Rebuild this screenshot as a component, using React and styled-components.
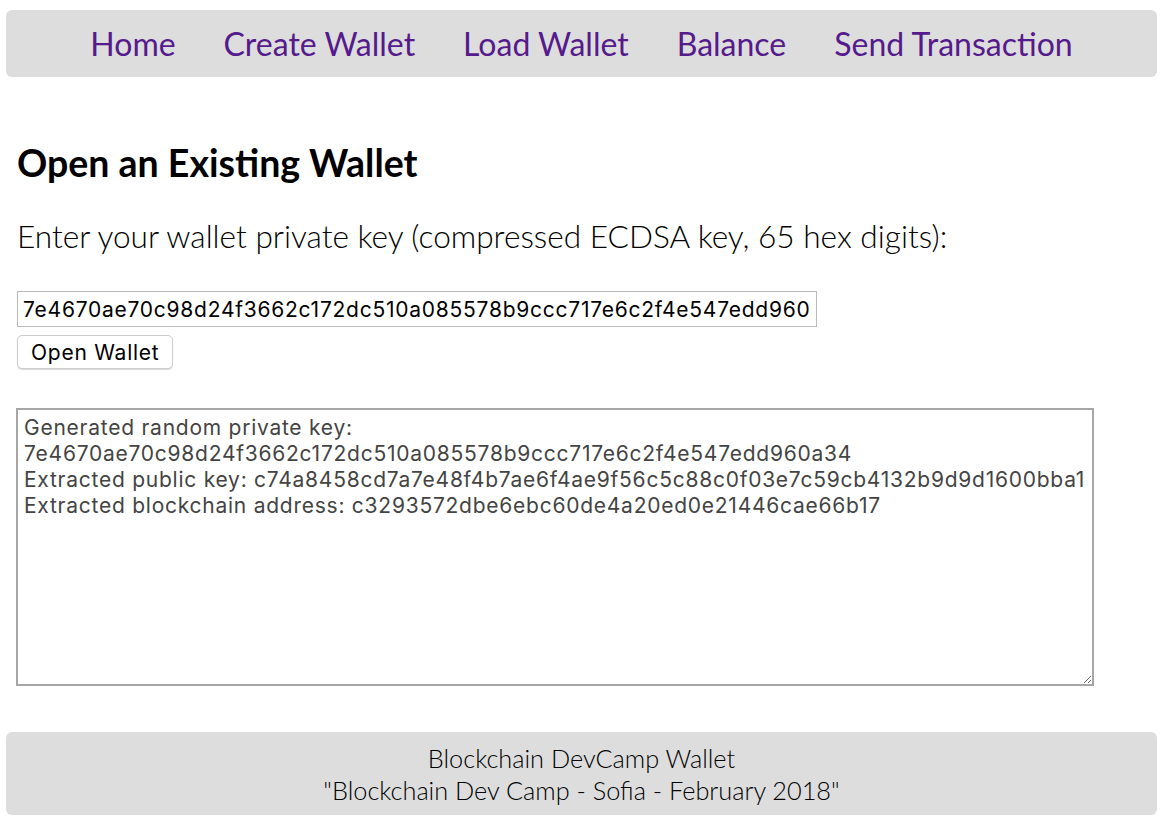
import React from "react";
import styled, { createGlobalStyle } from "styled-components";

const GlobalStyle = createGlobalStyle`
  body {
    margin: 0;
    background: #fff;
    font-family: Lato, "Open Sans", sans-serif;
  }
`;

const Page = styled.div`
  padding: 10px 11px 20px 6px;
`;

const Header = styled.nav`
  height: 67px;
  background-color: #ddd;
  border-radius: 6px;
  display: flex;
  justify-content: center;
  align-items: center;
  gap: 48px;
`;

const NavLink = styled.a`
  font-family: Lato, sans-serif;
  font-size: 32px;
  color: #551a8b;
  text-decoration: none;
  cursor: pointer;
`;

const Main = styled.main`
  padding: 0 0 0 11px;
`;

const Title = styled.h1`
  font-family: Lato, sans-serif;
  font-weight: 700;
  font-size: 37.5px;
  margin: 63px 0 0;
  line-height: 45px;
`;

const Label = styled.p`
  font-family: Lato, sans-serif;
  font-weight: 300;
  font-size: 31.6px;
  margin: 32px 0 0;
  line-height: 38px;
`;

const fieldFont = `
  font-family: Inter, "Liberation Sans", Arial, sans-serif;
  font-size: 21px;
  letter-spacing: 0.75px;
`;

const KeyInput = styled.input`
  display: block;
  box-sizing: border-box;
  width: 800px;
  height: 36px;
  margin-top: 36px;
  padding: 0 5px;
  border: 1px solid #bbb;
  ${fieldFont}
  color: #000;
  outline: none;
`;

const Button = styled.button`
  display: block;
  box-sizing: border-box;
  margin-top: 8px;
  height: 34px;
  padding: 0 13px;
  background: #fff;
  border: 1px solid #ccc;
  border-radius: 5px;
  box-shadow: 0 1px 1px rgba(0, 0, 0, 0.15);
  ${fieldFont}
  color: #000;
`;

const Output = styled.textarea`
  display: block;
  box-sizing: border-box;
  width: 1078px;
  height: 278px;
  margin: 39px 0 0 -1px;
  padding: 5px 6px;
  border: 2px solid #a6a6a6;
  ${fieldFont}
  line-height: 26px;
  color: #444;
  resize: both;
  outline: none;
`;

const Footer = styled.footer`
  margin-top: 46px;
  height: 83px;
  background-color: #ddd;
  border-radius: 6px;
  display: flex;
  flex-direction: column;
  justify-content: center;
  align-items: center;
  font-family: Lato, sans-serif;
  font-weight: 300;
  font-size: 25.3px;
  line-height: 32px;
  color: #000;
`;

const links = ["Home", "Create Wallet", "Load Wallet", "Balance", "Send Transaction"];

const output = `Generated random private key:
7e4670ae70c98d24f3662c172dc510a085578b9ccc717e6c2f4e547edd960a34
Extracted public key: c74a8458cd7a7e48f4b7ae6f4ae9f56c5c88c0f03e7c59cb4132b9d9d1600bba1
Extracted blockchain address: c3293572dbe6ebc60de4a20ed0e21446cae66b17`;

export default function App() {
  return (
    <>
      <GlobalStyle />
      <Page>
        <Header>
          {links.map((l) => (
            <NavLink key={l}>{l}</NavLink>
          ))}
        </Header>
        <Main>
          <Title>Open an Existing Wallet</Title>
          <Label>Enter your wallet private key (compressed ECDSA key, 65 hex digits):</Label>
          <KeyInput defaultValue="7e4670ae70c98d24f3662c172dc510a085578b9ccc717e6c2f4e547edd960" />
          <Button>Open Wallet</Button>
          <Output readOnly value={output} />
        </Main>
        <Footer>
          <div>Blockchain DevCamp Wallet</div>
          <div>"Blockchain Dev Camp - Sofia - February 2018"</div>
        </Footer>
      </Page>
    </>
  );
}
